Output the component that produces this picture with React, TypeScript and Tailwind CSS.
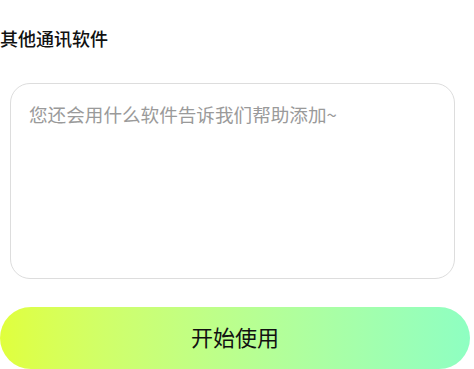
export default function App() {
  return (
    <div className="w-[474px] h-[369px] overflow-hidden bg-white font-['Noto_Sans_CJK_SC',sans-serif]">
      {/* 标题 */}
      <div className="pt-[29px] text-[18px] leading-[18px] font-medium text-[#111]">其他通讯软件</div>

      {/* 输入框 */}
      <div className="mt-[36px] ml-[10px] mr-[19px] h-[196px] rounded-[20px] border border-[#dddddd] bg-white px-[18px] pt-[17px]">
        <textarea
          className="w-full h-full resize-none outline-none bg-transparent text-[18.6px] leading-[26px] text-[#333] placeholder:text-[#9a9a9a]"
          placeholder="您还会用什么软件告诉我们帮助添加~"
        />
      </div>

      {/* 按钮 */}
      <button className="mt-[28px] w-[470px] h-[62px] rounded-full bg-gradient-to-r from-[#e0ff3c] to-[#8effc2] flex items-center justify-center pb-[4px] text-[22px] text-[#111]">
        开始使用
      </button>
    </div>
  )
}
